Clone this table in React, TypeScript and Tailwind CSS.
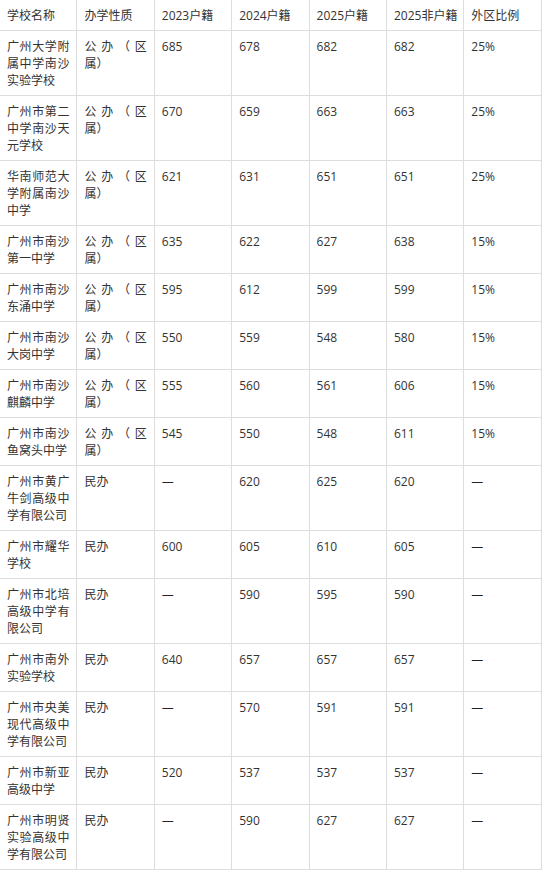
import React from "react";

const headers = ["学校名称", "办学性质", "2023户籍", "2024户籍", "2025户籍", "2025非户籍", "外区比例"];

const rows: string[][] = [
  ["广州大学附属中学南沙实验学校", "公办（区属）", "685", "678", "682", "682", "25%"],
  ["广州市第二中学南沙天元学校", "公办（区属）", "670", "659", "663", "663", "25%"],
  ["华南师范大学附属南沙中学", "公办（区属）", "621", "631", "651", "651", "25%"],
  ["广州市南沙第一中学", "公办（区属）", "635", "622", "627", "638", "15%"],
  ["广州市南沙东涌中学", "公办（区属）", "595", "612", "599", "599", "15%"],
  ["广州市南沙大岗中学", "公办（区属）", "550", "559", "548", "580", "15%"],
  ["广州市南沙麒麟中学", "公办（区属）", "555", "560", "561", "606", "15%"],
  ["广州市南沙鱼窝头中学", "公办（区属）", "545", "550", "548", "611", "15%"],
  ["广州市黄广牛剑高级中学有限公司", "民办", "—", "620", "625", "620", "—"],
  ["广州市耀华学校", "民办", "600", "605", "610", "605", "—"],
  ["广州市北培高级中学有限公司", "民办", "—", "590", "595", "590", "—"],
  ["广州市南外实验学校", "民办", "640", "657", "657", "657", "—"],
  ["广州市央美现代高级中学有限公司", "民办", "—", "570", "591", "591", "—"],
  ["广州市新亚高级中学", "民办", "520", "537", "537", "537", "—"],
  ["广州市明贤实验高级中学有限公司", "民办", "—", "590", "627", "627", "—"],
];

export default function App() {
  return (
    <div className="w-[542px] h-[870px] overflow-hidden bg-white">
      <table
        className="table-fixed border-collapse w-[542px] -ml-[1px] -mt-[1px] text-[12px] leading-[17px] text-[#333333]"
        style={{ fontFamily: '"Open Sans", "Noto Sans CJK SC", sans-serif' }}
      >
        <colgroup>
          {headers.map((_, i) => (
            <col key={i} className="w-[77.4px]" />
          ))}
        </colgroup>
        <thead>
          <tr>
            {headers.map((h) => (
              <th
                key={h}
                className="border border-[#dddddd] px-[7px] pt-[7px] pb-[6px] text-left font-normal whitespace-nowrap"
              >
                {h}
              </th>
            ))}
          </tr>
        </thead>
        <tbody>
          {rows.map((r, ri) => (
            <tr key={ri}>
              {r.map((c, ci) => (
                <td
                  key={ci}
                  className="border border-[#dddddd] px-[7px] pt-[7px] pb-[6px] align-top text-justify"
                >
                  {c === "—" ? (
                    <span className="font-['DejaVu_Sans'] text-[#222222]">—</span>
                  ) : (
                    c
                  )}
                </td>
              ))}
            </tr>
          ))}
        </tbody>
      </table>
    </div>
  );
}
